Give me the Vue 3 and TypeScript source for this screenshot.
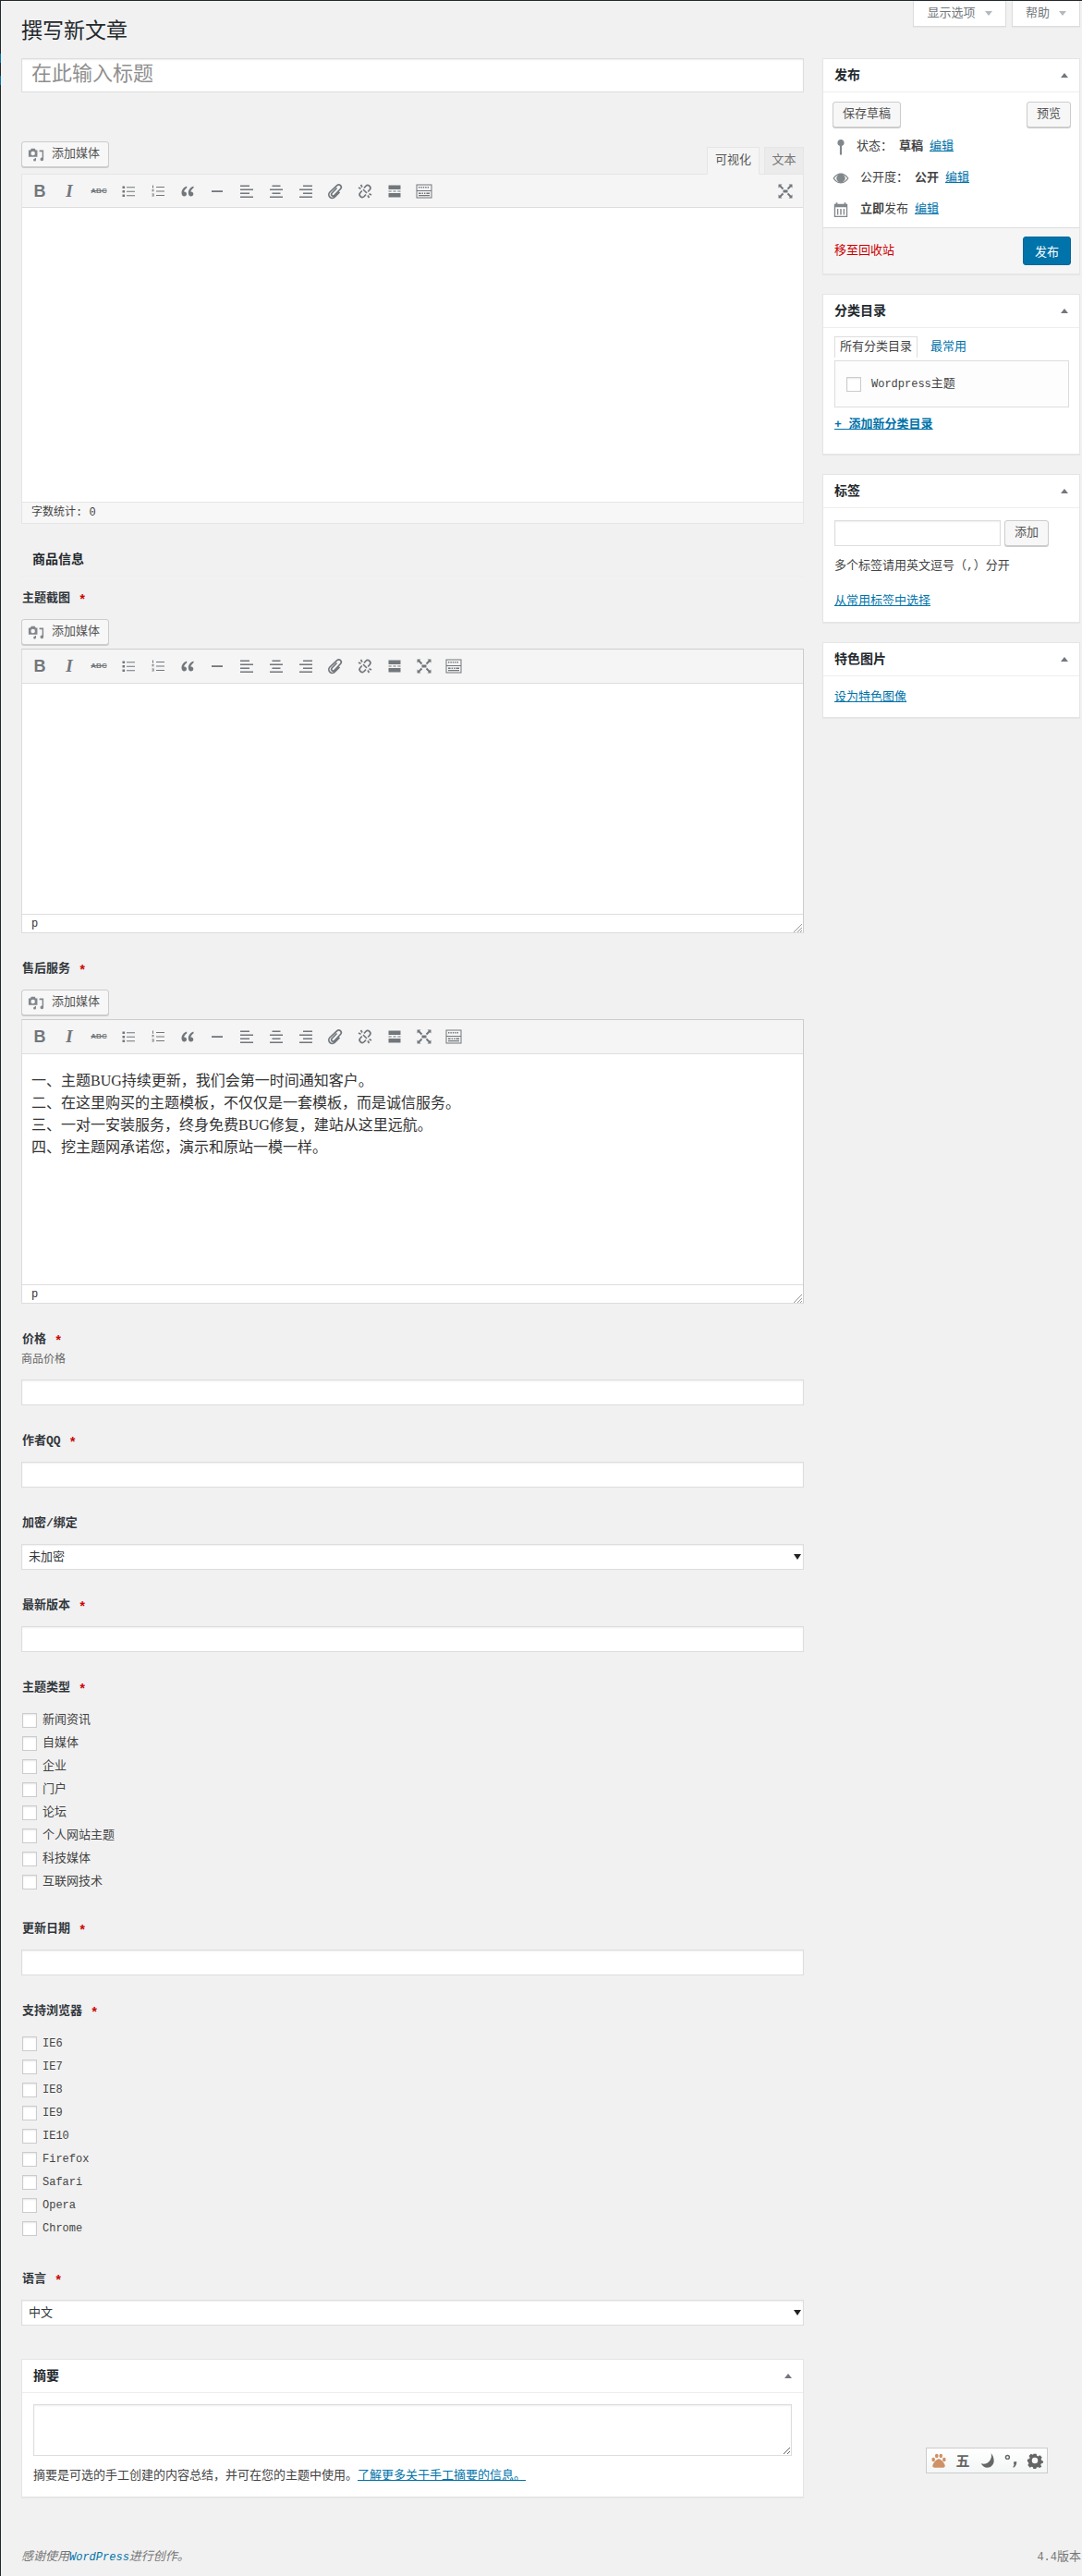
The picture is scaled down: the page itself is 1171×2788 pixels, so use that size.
<script setup lang="ts">
interface Icon {
  key: string
  text?: string
  d?: string
  s?: string
  right?: boolean
}
interface Block {
  kind: 'editor' | 'heading' | 'text' | 'select' | 'check'
  label?: string
  required?: boolean
  desc?: string
  main?: boolean
  lines?: string[]
  value?: string
  options?: string[]
  latin?: boolean
  extra?: boolean
}

const B: Icon = { key: 'b', text: 'B' }
const I: Icon = { key: 'i', text: 'I' }
const S: Icon = { key: 'abc', text: 'ABC' }
const UL: Icon = { key: 'ul', d: 'M3.5 4.5h2.6v2.6H3.5zM8 5.2h9v1.1H8zM3.5 9h2.6v2.6H3.5zM8 9.7h9v1.1H8zM3.5 13.5h2.6v2.6H3.5zM8 14.2h9v1.1H8z' }
const OL: Icon = { key: 'ol', d: 'M4 3.5h1v3.2H4zM3.4 8h2.2v.8H4.2v.6h1.4v.8H3.4v-.8h1.3v-.6H3.4zM3.4 12.5h2.2v3H3.4v-.7h1.3v-.5H3.8v-.6h.9v-.5H3.4zM8 5h9v1.1H8zM8 9.5h9v1.1H8zM8 14h9v1.1H8z' }
const Q: Icon = { key: 'q', d: 'M9.2 4.5C6 5.6 3.5 8.3 3.5 11.8c0 2.3 1.2 3.7 2.9 3.7 1.5 0 2.6-1.1 2.6-2.5S8 10.6 6.7 10.6c-.3 0-.5 0-.7.1.3-1.7 1.5-3.3 3.2-4.3zM16.5 4.5c-3.2 1.1-5.7 3.8-5.7 7.3 0 2.3 1.2 3.7 2.9 3.7 1.5 0 2.6-1.1 2.6-2.5S15.3 10.6 14 10.6c-.3 0-.5 0-.7.1.3-1.7 1.5-3.3 3.2-4.3z' }
const HR: Icon = { key: 'hr', d: 'M4 9.2h12v1.8H4z' }
const AL: Icon = { key: 'al', d: 'M3 3.5h10v1.5H3zM3 7.5h14V9H3zM3 11.5h10V13H3zM3 15.5h14V17H3z' }
const AC: Icon = { key: 'ac', d: 'M5.5 3.5h9v1.5h-9zM3 7.5h14V9H3zM5.5 11.5h9V13h-9zM3 15.5h14V17H3z' }
const AR: Icon = { key: 'ar', d: 'M7 3.5h10v1.5H7zM3 7.5h14V9H3zM7 11.5h10V13H7zM3 15.5h14V17H3z' }
const LINK: Icon = { key: 'link', s: 'M11.500 6.500 6.200 12a1.800 1.800 0 0 0 2.600 2.500l6.900-7.200a2.700 2.700 0 0 0-3.900-3.700L3.900 11a3.700 3.700 0 0 0 5.400 5.200l5.200-5.400' }
const UNLINK: Icon = { key: 'unlink', s: 'M9 6.500l1.800-2a2.900 2.900 0 0 1 4.200 4l-1.800 2M11 13.500l-1.800 2a2.900 2.900 0 0 1-4.200-4l1.800-2M5.500 3l1.500 2.500M3 6l2.500 1.200M14.500 17L13 14.500M17 14l-2.500-1.200M8 8l4 4' }
const MORE: Icon = { key: 'more', d: 'M3.5 3.500h13v4.500h-13zM3.500 9.400h3.200v1.200H3.500zM8.400 9.400h3.200v1.200H8.400zM13.300 9.400h3.200v1.200h-3.200zM3.500 12h13v4.500h-13z' }
const KITCHEN: Icon = { key: 'kitchen', d: 'M1.500 2.500h17v15h-17zM2.500 3.500v5.400h15V3.500zM2.500 10v6.500h15V10zM4 5h1.400v1.400H4zM6.400 5h1.400v1.400H6.400zM8.800 5h1.400v1.400H8.800zM11.200 5h1.400v1.400h-1.400zM13.600 5H15v1.400h-1.400zM4 11.500h2.600v1.400H4zM7.600 11.500H9v1.400H7.600zM10 11.500h1.400v1.400H10zM12.400 11.500h3.600v1.400h-3.600zM4 14h12v1.200H4z' }
const FULL: Icon = { key: 'full', d: 'M7.500 8.500h5v3h-5zM2.500 2.500h4l-1.300 1.300 3 3-1.400 1.400-3-3L2.500 6.500zM17.500 2.500v4l-1.300-1.300-3 3-1.400-1.400 3-3L13.500 2.500zM2.500 17.500v-4l1.300 1.300 3-3 1.400 1.400-3 3 1.300 1.300zM17.500 17.500h-4l1.300-1.300-3-3 1.400-1.400 3 3 1.300-1.300z' }

const base = [B, I, S, UL, OL, Q, HR, AL, AC, AR, LINK, UNLINK, MORE]
const mainIcons: Icon[] = [...base, KITCHEN, { ...FULL, right: true }]
const fieldIcons: Icon[] = [...base, FULL, KITCHEN]

const serviceLines = [
  '一、主题BUG持续更新，我们会第一时间通知客户。',
  '二、在这里购买的主题模板，不仅仅是一套模板，而是诚信服务。',
  '三、一对一安装服务，终身免费BUG修复，建站从这里远航。',
  '四、挖主题网承诺您，演示和原站一模一样。'
]

const blocks: Block[] = [
  { kind: 'editor', main: true },
  { kind: 'heading', label: '商品信息' },
  { kind: 'editor', label: '主题截图', required: true },
  { kind: 'editor', label: '售后服务', required: true, lines: serviceLines },
  { kind: 'text', label: '价格', required: true, desc: '商品价格' },
  { kind: 'text', label: '作者QQ', required: true },
  { kind: 'select', label: '加密/绑定', value: '未加密', options: ['未加密'] },
  { kind: 'text', label: '最新版本', required: true },
  {
    kind: 'check',
    label: '主题类型',
    required: true,
    options: ['新闻资讯', '自媒体', '企业', '门户', '论坛', '个人网站主题', '科技媒体', '互联网技术']
  },
  { kind: 'text', label: '更新日期', required: true },
  {
    kind: 'check',
    label: '支持浏览器',
    required: true,
    latin: true,
    options: ['IE6', 'IE7', 'IE8', 'IE9', 'IE10', 'Firefox', 'Safari', 'Opera', 'Chrome']
  },
  { kind: 'select', label: '语言', required: true, value: '中文', options: ['中文'], extra: true }
]
</script>

<template>
  <div class="page">
    <i class="nav-mark first"></i>
    <i class="nav-mark second"></i>

    <div class="columns">
      <main class="main">
        <h1 class="title">撰写新文章</h1>
        <input class="title-input" type="text" placeholder="在此输入标题" />

        <template v-for="(b, idx) in blocks" :key="idx">
          <div v-if="b.kind === 'heading'" class="section-head">{{ b.label }}</div>

          <div v-else class="field" :class="{ 'field-main': b.main, 'field-extra': b.extra }">
            <div v-if="b.label" class="label">
              {{ b.label }}<span v-if="b.required" class="star">*</span>
            </div>
            <div v-if="b.desc" class="desc">{{ b.desc }}</div>

            <template v-if="b.kind === 'editor'">
              <div class="editor-head" :class="{ 'editor-head-main': b.main }">
                <button class="btn media" type="button">
                  <svg class="media-icon" viewBox="0 0 20 20" width="18" height="18">
                    <path fill-rule="evenodd" fill="#82878c" d="M1 5h2.200l1-2h4.400l1 2H11.600v8H1zM6.300 6.400a2.500 2.500 0 1 0 0 5 2.500 2.500 0 0 0 0-5z" />
                    <path fill="#82878c" d="M14 5h5v11a2 2 0 1 1-1.600-2V7H14zM10 14.500v2.200a1.600 1.600 0 1 1-1.300-1.500v-.7z" />
                  </svg>
                  <span class="media-text">添加媒体</span>
                </button>
                <div v-if="b.main" class="mode-tabs">
                  <span class="mode active">可视化</span>
                  <span class="mode">文本</span>
                </div>
              </div>
              <div class="editor" :class="b.main ? 'editor-main' : 'editor-sub'">
                <div class="toolbar">
                  <span
                    v-for="ic in b.main ? mainIcons : fieldIcons"
                    :key="ic.key"
                    class="tool"
                    :class="[{ 'tool-right': ic.right }, ic.text ? 'tool-' + ic.key : '']"
                  >
                    <template v-if="ic.text">{{ ic.text }}</template>
                    <svg v-else viewBox="0 0 20 20" width="20" height="20">
                      <path v-if="ic.d" fill-rule="evenodd" fill="#72777c" :d="ic.d" />
                      <path v-if="ic.s" fill="none" stroke="#72777c" stroke-width="1.7" :d="ic.s" />
                    </svg>
                  </span>
                </div>
                <div class="content">
                  <p v-for="line in b.lines" :key="line" class="content-line">{{ line }}</p>
                </div>
                <div v-if="b.main" class="status status-main">字数统计: 0</div>
                <div v-else class="status status-sub">
                  <span>p</span>
                  <svg class="grip" viewBox="0 0 10 10" width="10" height="10">
                    <path fill="none" stroke="#999" d="M1 10 10 1M5 10 10 5M8 10 10 8" />
                  </svg>
                </div>
              </div>
            </template>

            <input v-else-if="b.kind === 'text'" class="input" type="text" />

            <div v-else-if="b.kind === 'select'" class="select-wrap">
              <select class="select">
                <option v-for="o in b.options" :key="o">{{ o }}</option>
              </select>
            </div>

            <div v-else-if="b.kind === 'check'" class="checks">
              <label v-for="o in b.options" :key="o" class="check-row">
                <input class="checkbox" type="checkbox" />
                <span :class="{ latin: b.latin }">{{ o }}</span>
              </label>
            </div>
          </div>
        </template>

        <section class="box excerpt">
          <header class="box-head"><span>摘要</span><i class="collapse"></i></header>
          <div class="excerpt-body">
            <textarea class="excerpt-area"></textarea>
            <p class="excerpt-note">
              摘要是可选的手工创建的内容总结，并可在您的主题中使用。<a class="link">了解更多关于手工摘要的信息。</a>
            </p>
          </div>
        </section>
      </main>

      <aside class="side">
        <div class="screen-tabs">
          <span class="screen-tab">显示选项<i class="down"></i></span>
          <span class="screen-tab help">帮助<i class="down"></i></span>
        </div>

        <section class="box publish">
          <header class="box-head"><span>发布</span><i class="collapse"></i></header>
          <div class="publish-actions">
            <button class="btn" type="button">保存草稿</button>
            <button class="btn" type="button">预览</button>
          </div>
          <div class="pub-rows">
            <div class="pub-row">
              <svg class="pub-icon" viewBox="0 0 20 20" width="18" height="18">
                <path fill="#82878c" d="M10 1a4 4 0 0 1 1.200 7.800V19l-1.200 1-1.200-1V8.800A4 4 0 0 1 10 1z" />
              </svg>
              <span class="pub-key narrow">状态：</span><b>草稿</b><a class="link">编辑</a>
            </div>
            <div class="pub-row">
              <svg class="pub-icon" viewBox="0 0 20 20" width="18" height="18">
                <path fill-rule="evenodd" fill="#82878c" d="M10 4c4.200 0 7.500 3 9.500 6-2 3-5.300 6-9.500 6S2.500 13 .5 10c2-3 5.300-6 9.500-6zM2.200 10c1.500 2 3.500 3.800 5.300 4.500a5 5 0 0 1 0-9C5.700 6.200 3.700 8 2.200 10zm10.300-4.500a5 5 0 0 1 0 9c1.800-.7 3.800-2.500 5.300-4.500-1.500-2-3.500-3.800-5.300-4.500z" />
              </svg>
              <span class="pub-key">公开度：</span><b>公开</b><a class="link">编辑</a>
            </div>
            <div class="pub-row">
              <svg class="pub-icon" viewBox="0 0 20 20" width="18" height="18">
                <path fill-rule="evenodd" fill="#82878c" d="M2 3h2V1.500h2V3h8V1.500h2V3h2v16H2zM3.500 7v10.500h13V7zM5.500 9H7v7H5.500zM9.200 9h1.600v7H9.200zM13 9h1.500v7H13z" />
              </svg>
              <span class="pub-key"><b>立即</b>发布</span><a class="link">编辑</a>
            </div>
          </div>
          <div class="publish-foot">
            <a class="trash">移至回收站</a>
            <button class="btn-primary" type="button">发布</button>
          </div>
        </section>

        <section class="box">
          <header class="box-head"><span>分类目录</span><i class="collapse"></i></header>
          <div class="cat-body">
            <div class="cat-tabs">
              <span class="cat-tab">所有分类目录</span>
              <a class="cat-other">最常用</a>
            </div>
            <div class="cat-list">
              <label class="cat-item">
                <input class="checkbox" type="checkbox" />
                <span><span class="latin">Wordpress</span>主题</span>
              </label>
            </div>
            <a class="link add-cat">+ 添加新分类目录</a>
          </div>
        </section>

        <section class="box">
          <header class="box-head"><span>标签</span><i class="collapse"></i></header>
          <div class="tag-body">
            <div class="tag-row">
              <input class="input tag-input" type="text" />
              <button class="btn" type="button">添加</button>
            </div>
            <p class="tag-hint">多个标签请用英文逗号（,）分开</p>
            <a class="link tag-link">从常用标签中选择</a>
          </div>
        </section>

        <section class="box">
          <header class="box-head"><span>特色图片</span><i class="collapse"></i></header>
          <div class="thumb-body"><a class="link">设为特色图像</a></div>
        </section>
      </aside>
    </div>

    <footer class="foot">
      <em class="foot-left">感谢使用<a class="foot-link latin">WordPress</a>进行创作。</em>
      <span class="foot-right"><span class="latin">4.4</span>版本</span>
    </footer>

    <div class="ime">
      <svg viewBox="0 0 20 20" width="18" height="18">
        <g fill="#cf9166">
          <ellipse cx="3.500" cy="9" rx="2" ry="2.500" />
          <ellipse cx="7.500" cy="4.500" rx="2" ry="2.500" />
          <ellipse cx="12.500" cy="4.500" rx="2" ry="2.500" />
          <ellipse cx="16.500" cy="9" rx="2" ry="2.500" />
          <path d="M10 8c3 0 7.500 6 7.500 8.500 0 1.500-1 2-2.500 2H5c-1.500 0-2.500-.5-2.500-2C2.500 14 7 8 10 8z" />
        </g>
      </svg>
      <span class="ime-char">五</span>
      <svg viewBox="0 0 20 20" width="18" height="18">
        <path fill="#666" d="M15 1.500c1.500 4-.5 9.500-4.500 11.500-2.500 1.300-5 1.300-7.500.5 1.500 3 4.500 5 7.500 5 4.500 0 8-3.500 8-8 0-3.600-1.300-7-3.500-9z" />
      </svg>
      <svg viewBox="0 0 20 20" width="18" height="18">
        <circle cx="6" cy="6" r="2.200" fill="none" stroke="#666" stroke-width="1.600" />
        <path fill="#666" d="M13.500 11.500h3.500c0 3-1.200 5.500-3.500 7l-1-.8c1-1 1.500-2 1.500-3h-.5z" />
      </svg>
      <svg viewBox="0 0 20 20" width="18" height="18">
        <path fill-rule="evenodd" fill="#666" d="M8 1h4l.6 2.500 1.800.8L16.700 3l2.800 2.800-1.300 2.300.8 1.900 2 .5v3l-2.500.6-.8 1.800 1.300 2.300-2.800 1.800-2.300-1.300-1.800.8-.6 2H8l-.6-2.500-1.800-.8-2.300 1.300L.5 16.200l1.300-2.300-.8-1.900L0 11.500v-3l2.500-.6.800-1.800L2 3.800 4.800 1l2.300 1.300 .9-.5zM10 6a4 4 0 1 0 0 8 4 4 0 0 0 0-8z" transform="translate(1 1) scale(.9)" />
      </svg>
    </div>
  </div>
</template>

<style>
html,
body {
  margin: 0;
  background: #f1f1f1;
}
</style>

<style scoped>
* {
  box-sizing: border-box;
}
.page {
  position: relative;
  min-height: 2788px;
  border-top: 1px solid #23282d;
  border-left: 1px solid #23282d;
  padding: 0 2px 0 22px;
  background: #f1f1f1;
  color: #444;
  font-family: "Liberation Mono", "Noto Sans CJK SC", monospace;
  font-size: 13px;
  line-height: 18px;
}
.nav-mark {
  position: absolute;
  left: -1px;
  width: 1px;
  height: 10px;
  background: #0073aa;
}
.nav-mark.first {
  top: 57px;
}
.nav-mark.second {
  top: 81px;
}
.columns {
  display: grid;
  grid-template-columns: 847px 279px;
  column-gap: 20px;
  align-items: start;
}
.title {
  margin: 22px 0 16px;
  font-size: 23px;
  line-height: 24px;
  font-weight: 400;
  color: #23282d;
}
.title-input {
  display: block;
  width: 100%;
  height: 37px;
  margin-bottom: 53px;
  padding: 0 10px;
  border: 1px solid #ddd;
  background: #fff;
  box-shadow: inset 0 1px 2px rgba(0, 0, 0, 0.07);
  font-family: inherit;
  font-size: 22px;
  outline: 0;
}
.title-input::placeholder {
  color: #8f8f8f;
  opacity: 1;
}
.field {
  margin-top: 30px;
}
.field-main {
  margin-top: 0;
}
.field-extra {
  margin-top: 34px;
}
.section-head {
  margin-top: 27px;
  height: 30px;
  margin-bottom: -15px;
  padding-left: 12px;
  border-bottom: 1px solid #eee;
  font-size: 14px;
  line-height: 24px;
  font-weight: 700;
  color: #23282d;
}
.label {
  height: 18px;
  margin-bottom: 13px;
  font-weight: 700;
  color: #32373c;
  padding-left: 1px;
}
.desc {
  margin: -9px 0 12px;
  font-size: 12px;
  color: #666;
  line-height: 18px;
}
.star {
  margin-left: 9px;
  color: #c00;
  font-size: 14px;
  vertical-align: -3px;
}
.btn {
  height: 28px;
  padding: 0 10px;
  border: 1px solid #ccc;
  border-radius: 3px;
  background: #f7f7f7;
  box-shadow: 0 1px 0 #ccc;
  color: #555;
  font-family: inherit;
  font-size: 13px;
  line-height: 26px;
}
.media {
  display: inline-flex;
  align-items: center;
  gap: 8px;
  padding: 0 0 0 6px;
  width: 95px;
}
.media-icon {
  flex: none;
}
.media-text {
  white-space: nowrap;
}
.editor-head {
  display: flex;
  justify-content: space-between;
  margin-bottom: 4px;
}
.editor-head-main {
  height: 35px;
  margin-bottom: 0;
}
.mode-tabs {
  display: flex;
  align-self: flex-end;
  gap: 5px;
  margin-bottom: -1px;
  position: relative;
}
.mode {
  height: 30px;
  width: 43px;
  border: 1px solid #e5e5e5;
  background: #ebebeb;
  color: #777;
  text-align: center;
  line-height: 28px;
}
.mode.active {
  width: 57px;
  background: #f5f5f5;
  border-bottom-color: #f5f5f5;
  color: #555;
}
.editor {
  display: flex;
  flex-direction: column;
  background: #fff;
}
.editor-main {
  height: 379px;
  border: 1px solid #e5e5e5;
}
.editor-sub {
  height: 308px;
  border: 1px solid #ccc;
  border-bottom-color: #ddd;
  border-left-color: #ddd;
}
.toolbar {
  flex: none;
  display: flex;
  align-items: center;
  height: 36px;
  padding: 0 3px;
  background: #f5f5f5;
  border-bottom: 1px solid #ddd;
}
.editor-sub .toolbar {
  height: 37px;
}
.tool {
  width: 32px;
  height: 20px;
  display: flex;
  justify-content: center;
  align-items: center;
  color: #72777c;
  line-height: 20px;
}
.tool-right {
  margin-left: auto;
}
.tool-b {
  font-family: "Liberation Sans", sans-serif;
  font-weight: 700;
  font-size: 18px;
}
.tool-i {
  font-family: "Liberation Serif", serif;
  font-style: italic;
  font-weight: 700;
  font-size: 19px;
}
.tool-abc {
  font-family: "Liberation Sans", sans-serif;
  font-weight: 700;
  font-size: 8px;
  text-decoration: line-through;
}
.content {
  flex: 1;
  padding: 17px 10px 0;
  font-family: "Liberation Serif", "Noto Sans CJK SC", serif;
  font-size: 16px;
  line-height: 24px;
  color: #333;
}
.content-line {
  margin: 0;
}
.status {
  flex: none;
  font-size: 12px;
  padding-left: 10px;
}
.status-main {
  height: 23px;
  line-height: 22px;
  background: #f7f7f7;
  border-top: 1px solid #e5e5e5;
}
.status-sub {
  display: flex;
  justify-content: space-between;
  align-items: flex-end;
  height: 20px;
  line-height: 18px;
  border-top: 1px solid #ddd;
  padding-right: 1px;
  color: #333;
}
.grip {
  display: block;
}
.input {
  display: block;
  width: 100%;
  height: 28px;
  padding: 0 8px;
  border: 1px solid #ddd;
  background: #fff;
  box-shadow: inset 0 1px 2px rgba(0, 0, 0, 0.07);
  outline: 0;
}
.select-wrap {
  position: relative;
}
.select-wrap::after {
  content: "";
  position: absolute;
  right: 3px;
  top: 11px;
  border: 4px solid transparent;
  border-top: 6px solid #222;
  border-bottom: 0;
  pointer-events: none;
}
.select {
  display: block;
  width: 100%;
  height: 28px;
  padding: 0 7px;
  border: 1px solid #ddd;
  border-radius: 0;
  background: #fff;
  box-shadow: inset 0 1px 2px rgba(0, 0, 0, 0.07);
  appearance: none;
  color: #32373c;
  font-family: inherit;
  font-size: 13px;
  outline: 0;
}
.checks {
  display: block;
}
.check-row {
  display: flex;
  align-items: center;
  gap: 6px;
  height: 25px;
  padding-left: 1px;
}
.checkbox {
  flex: none;
  width: 16px;
  height: 16px;
  margin: 0;
  border: 1px solid #ccc;
  background: #fff;
  box-shadow: inset 0 1px 2px rgba(0, 0, 0, 0.1);
  appearance: none;
}
.latin {
  font-size: 12px;
}
.box {
  display: block;
  background: #fff;
  border: 1px solid #e5e5e5;
  box-shadow: 0 1px 1px rgba(0, 0, 0, 0.04);
  margin-top: 21px;
}
.box-head {
  display: flex;
  justify-content: space-between;
  align-items: center;
  height: 36px;
  padding: 0 12px;
  border-bottom: 1px solid #eee;
  font-size: 14px;
  font-weight: 700;
  color: #23282d;
}
.collapse {
  border: 4px solid transparent;
  border-bottom: 5px solid #72777c;
  border-top: 0;
}
.excerpt {
  margin-top: 36px;
}
.excerpt-body {
  padding: 12px 12px 13px;
}
.excerpt-area {
  display: block;
  width: 100%;
  height: 56px;
  border: 1px solid #ddd;
  background: #fff;
  box-shadow: inset 0 1px 2px rgba(0, 0, 0, 0.07);
  outline: 0;
  margin: 0;
}
.excerpt-note {
  margin: 13px 0 0;
  color: #444;
}
.link {
  color: #0073aa;
  text-decoration: underline;
}
.screen-tabs {
  display: flex;
  justify-content: flex-end;
  gap: 6px;
  height: 28px;
}
.screen-tab {
  display: flex;
  align-items: center;
  justify-content: center;
  gap: 10px;
  width: 101px;
  height: 28px;
  background: #fff;
  border: 1px solid #ddd;
  border-top: 0;
  box-shadow: 0 1px 1px rgba(0, 0, 0, 0.04);
  color: #72777c;
}
.screen-tab.help {
  width: 74px;
}
.down {
  border: 4px solid transparent;
  border-top: 5px solid #b4b9be;
  border-bottom: 0;
}
.publish {
  margin-top: 34px;
}
.publish-actions {
  display: flex;
  justify-content: space-between;
  padding: 10px 9px 0 10px;
}
.publish-actions .btn:last-child {
  width: 48px;
  padding: 0;
}
.pub-rows {
  padding: 4px 0 2px;
}
.pub-row {
  display: flex;
  align-items: center;
  height: 34px;
  padding-left: 10px;
}
.pub-icon {
  flex: none;
  margin-right: 12px;
}
.pub-key {
  margin-right: 7px;
}
.pub-key.narrow {
  margin-left: -4px;
}
.pub-row b {
  margin-right: 7px;
}
.pub-key b {
  margin-right: 0;
}
.publish-foot {
  display: flex;
  justify-content: space-between;
  align-items: center;
  height: 50px;
  padding: 0 9px 0 12px;
  background: #f5f5f5;
  border-top: 1px solid #ddd;
}
.trash {
  color: #c00;
  text-decoration: none;
}
.btn-primary {
  width: 52px;
  height: 31px;
  border: 1px solid #006799;
  border-radius: 3px;
  background: #0073aa;
  color: #fff;
  font-family: inherit;
  font-size: 13px;
}
.cat-body {
  padding: 10px 11px 22px 12px;
}
.cat-tabs {
  display: flex;
  align-items: flex-end;
  height: 22px;
}
.cat-tab {
  width: 90px;
  height: 23px;
  border: 1px solid #ddd;
  border-bottom: 0;
  text-align: center;
  line-height: 22px;
  color: #444;
}
.cat-other {
  margin-left: 14px;
  height: 22px;
  line-height: 22px;
  color: #0073aa;
}
.cat-list {
  margin-top: 3px;
  height: 51px;
  border: 1px solid #ddd;
  background: #fdfdfd;
  padding-left: 12px;
  display: flex;
  align-items: center;
}
.cat-item {
  display: flex;
  align-items: center;
  gap: 11px;
}
.add-cat {
  display: inline-block;
  margin-top: 10px;
  font-weight: 700;
}
.tag-body {
  padding: 13px 12px;
}
.tag-row {
  display: flex;
  gap: 4px;
}
.tag-input {
  width: 180px;
}
.tag-row .btn {
  width: 48px;
  padding: 0;
}
.tag-hint {
  margin: 13px 0 0;
}
.tag-link {
  display: inline-block;
  margin-top: 20px;
}
.thumb-body {
  padding: 14px 12px 12px;
}
.foot {
  display: flex;
  justify-content: space-between;
  margin: 56px -1px 0 0;
  height: 18px;
  color: #777;
}
.foot-left {
  font-style: italic;
}
.foot-link {
  color: #0073aa;
}
.ime {
  position: absolute;
  left: 1001px;
  top: 2648px;
  width: 132px;
  height: 28px;
  display: flex;
  align-items: center;
  border: 1px solid #ccc;
  background: linear-gradient(#fff, #f3f6f6);
}
.ime > * {
  flex: none;
  width: 26px;
  height: 18px;
  text-align: center;
}
.ime-char {
  color: #666;
  font-family: "Noto Sans CJK SC", sans-serif;
  font-size: 15px;
  line-height: 18px;
  font-weight: 700;
}
</style>
